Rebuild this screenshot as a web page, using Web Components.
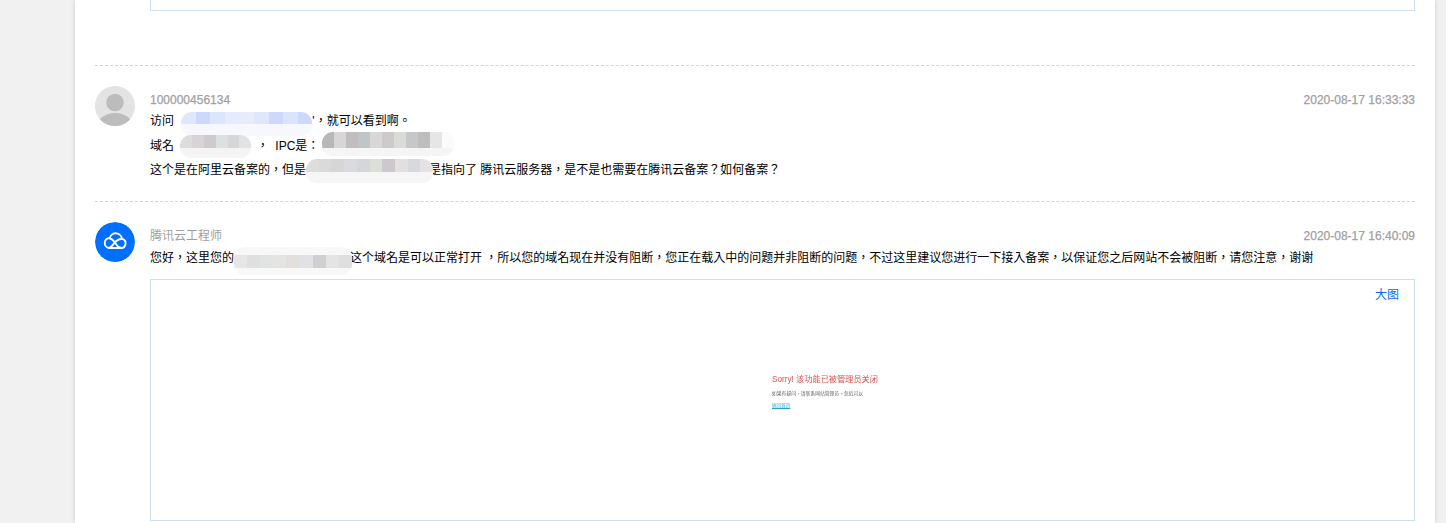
<!DOCTYPE html>
<html lang="zh-TW">
<head>
<meta charset="utf-8">
<title>工单</title>
<style>
html,body{margin:0;padding:0;height:523px;overflow:hidden;background:#f1f1f1;font:12px "Liberation Sans","Noto Sans CJK TC",sans-serif;color:#000}
</style>
</head>
<body>
<ticket-page>
  <shot-box style="--h:11px;--mb:54px" top></shot-box>
  <reply-item name="100000456134" time="2020-08-17 16:33:33" kind="user">
    <text-line style="--lh:25px">访问 <mosaic-patch w="131" ml="4" top="-3" a="12" b="12" colors="#dfe7fb,#cdd9fb,#dbe5fb,#e4ebfc,#e6ecfc,#dfe7fb,#cdd9fb,#dae4fb,#cdd9fb" tail="#f6f8fe"></mosaic-patch>'，就可以看到啊。</text-line>
    <text-line style="--lh:24px">域名 <mosaic-patch w="71" ml="3" mr="2" top="-5" a="13" b="10" colors="#dcdcdc,#d8d4d6,#cfcbcc,#dde0e2,#d6d8d8,#e2e2e2" tail="#f4f4f4"></mosaic-patch> ， &nbsp;IPC是： <mosaic-patch w="132" ml="-1" top="-8" a="16" b="8" colors="#b9b7b7,#d8d6d7,#c2bebe,#c0c6c8,#d8d6d7,#cfc9cc,#d9dbd7,#c6c7cb,#bdbdbd,#e6e6e6,#fbfbfb" tail="#f5f5f5"></mosaic-patch></text-line>
    <text-line style="--lh:24px">这个是在阿里云备案的，但是<mosaic-patch w="123" over="4" top="-5" a="13" b="11" colors="#dddddd,#dadada,#d6d6d6,#dbdbdf,#d4d6d9,#dcdfd8,#cdc8ce,#e2dfe1,#d8d9de,#e6e1e2" tail="#f6f6f6"></mosaic-patch>是指向了 腾讯云服务器，是不是也需要在腾讯云备案？如何备案？</text-line>
  </reply-item>
  <reply-item name="腾讯云工程师" time="2020-08-17 16:40:09" kind="staff">
    <text-line style="--lh:26px">您好，这里您的<mosaic-patch w="116" over="2" top="-5" pre="8" a="13" b="7" colors="#e6e6e6,#dedfe0,#e2e3e3,#e4e4e2,#e2dfdd,#e2e2e6,#d0d0d3,#e4e4e4,#dfdfdf" tail="#f8f8f8"></mosaic-patch>这个域名是可以正常打开 ，所以您的域名现在并没有阻断，您正在载入中的问题并非阻断的问题，不过这里建议您进行一下接入备案，以保证您之后网站不会被阻断，请您注意，谢谢</text-line>
    <shot-box>
      <a-link slot="action">大图</a-link>
      <error-shot></error-shot>
    </shot-box>
  </reply-item>
</ticket-page>

<script>
function def(name, css, html){
  customElements.define(name, class extends HTMLElement{
    constructor(){
      super();
      this.attachShadow({mode:'open'}).innerHTML='<style>'+css+'</style>'+(typeof html==='function'?html(this):html);
    }
  });
}

def('ticket-page',
  ':host{display:block;box-sizing:border-box;width:1360px;height:523px;margin-left:75px;padding:0 20px;background:#fff;box-shadow:0 0 5px rgba(0,0,0,.14);overflow:hidden}',
  '<slot></slot>');

def('shot-box',
  ':host{display:flex;position:relative;box-sizing:border-box;margin:8px 0 0 0;height:242px;border:1px solid #cfe0ec;background:#fff}'+
  ':host([top]){height:var(--h);margin:0 0 var(--mb) 55px;border-top:0}'+
  '.action{position:absolute;right:15px;top:7px;z-index:1}'+
  '.body{flex:1;display:flex;align-items:flex-start}',
  '<div class="action"><slot name="action"></slot></div><div class="body"><slot></slot></div>');

def('a-link',
  ':host{display:inline;color:#006eff;font-size:12px;line-height:16px}',
  '<slot></slot>');

def('text-line',
  ':host{display:block;height:var(--lh);line-height:var(--lh);white-space:nowrap;font-size:12px;color:#000}',
  '<slot></slot>');

def('reply-item',
  ':host{display:flex;gap:15px;border-top:1px dashed #d4d4d4;padding-top:20px;height:115px}'+
  ':host([kind=staff]){height:auto}'+
  '.av{flex:none;width:40px;height:40px;border-radius:50%;overflow:hidden}'+
  '.av svg{display:block}'+
  '.main{flex:1;min-width:0}'+
  '.head{display:flex;justify-content:space-between;height:28px;line-height:28px;color:#aaa;font-size:12px;margin-bottom:-5px}'+
  '.name{font-weight:400;color:#a0a0a0;-webkit-text-stroke:.25px #a0a0a0}'+
  ':host([kind=staff]) .name{-webkit-text-stroke:0}'+
  '.time{font-weight:400;color:#a0a0a0;-webkit-text-stroke:.25px #a0a0a0}',
  function(h){
    var staff=h.getAttribute('kind')==='staff';
    var av=staff
      ?'<svg width="40" height="40" viewBox="0 0 40 40"><circle cx="20" cy="20" r="20" fill="#006eff"/><path d="M13.8 26H26a4.6 4.6 0 0 0 .9-9.1A6.15 6.15 0 0 0 14.8 16a5.05 5.05 0 0 0-1 10z" fill="none" stroke="#fff" stroke-width="1.9" stroke-linejoin="round"/><path d="M26.4 17c-3.8 0-5.6 2.2-7.2 4.2-1.5 1.9-2.8 4.6-5.4 4.8" fill="none" stroke="#fff" stroke-width="1.9" stroke-linecap="round"/><path d="M14.3 16.2c2 .2 3.300 1.400 4.500 2.900l1.800 2.300c1.400 1.900 2.600 4.600 5.600 4.600" fill="none" stroke="#fff" stroke-width="1.9" stroke-linecap="round"/></svg>'
      :'<svg width="40" height="40" viewBox="0 0 40 40"><rect width="40" height="40" fill="#e3e3e3"/><circle cx="20" cy="16.5" r="8.7" fill="#bcbcbc"/><ellipse cx="20" cy="39" rx="17" ry="12" fill="#bcbcbc"/></svg>';
    return '<div class="av">'+av+'</div><div class="main"><div class="head"><span class="name">'+h.getAttribute('name')+'</span><span class="time">'+h.getAttribute('time')+'</span></div><slot></slot></div>';
  });

def('mosaic-patch',
  ':host{display:inline-block;position:relative;vertical-align:middle;height:14px}'+
  '.m{position:absolute;left:0;overflow:hidden;border-radius:11px;background:#fff;z-index:1;filter:blur(.4px)}'+
  '.r{display:flex}.r i{flex:1;display:block;height:100%}',
  function(h){
    var n=function(k,d){return h.hasAttribute(k)?+h.getAttribute(k):d;};
    var cols=h.getAttribute('colors').split(',');
    var tail=h.getAttribute('tail');
    var w=n('w',100),over=n('over',0),pre=n('pre',0),a=n('a',13),b=n('b',10);
    h.style.width=w+'px';
    h.style.marginLeft=n('ml',0)+'px';
    h.style.marginRight=n('mr',0)+'px';
    var row=function(ht,cs){return '<div class="r" style="height:'+ht+'px">'+cs.map(function(c){return '<i style="background:'+c+'"></i>';}).join('')+'</div>';};
    return '<div class="m" style="top:'+n('top',-5)+'px;width:'+(w+over)+'px">'+(pre?row(pre,[tail]):'')+row(a,cols)+row(b,[tail])+'</div>';
  });

def('error-shot',
  ':host{display:block;width:130px;margin:93px 0 0 621px;filter:blur(.35px)}'+
  '.t{color:#d9534f;font-size:8.2px;line-height:14px;white-space:nowrap}'+
  '.s{color:#666;font-size:4.8px;line-height:13px;white-space:nowrap}'+
  '.l{color:#2a9fd6;font-size:4.6px;line-height:12px;text-decoration:underline;white-space:nowrap}',
  '<div class="t">Sorry! 该功能已被管理员关闭</div><div class="s">如果有疑问，请联系网站管理员。忽近可以</div><div class="l">返回首页</div>');
</script>
</body>
</html>
